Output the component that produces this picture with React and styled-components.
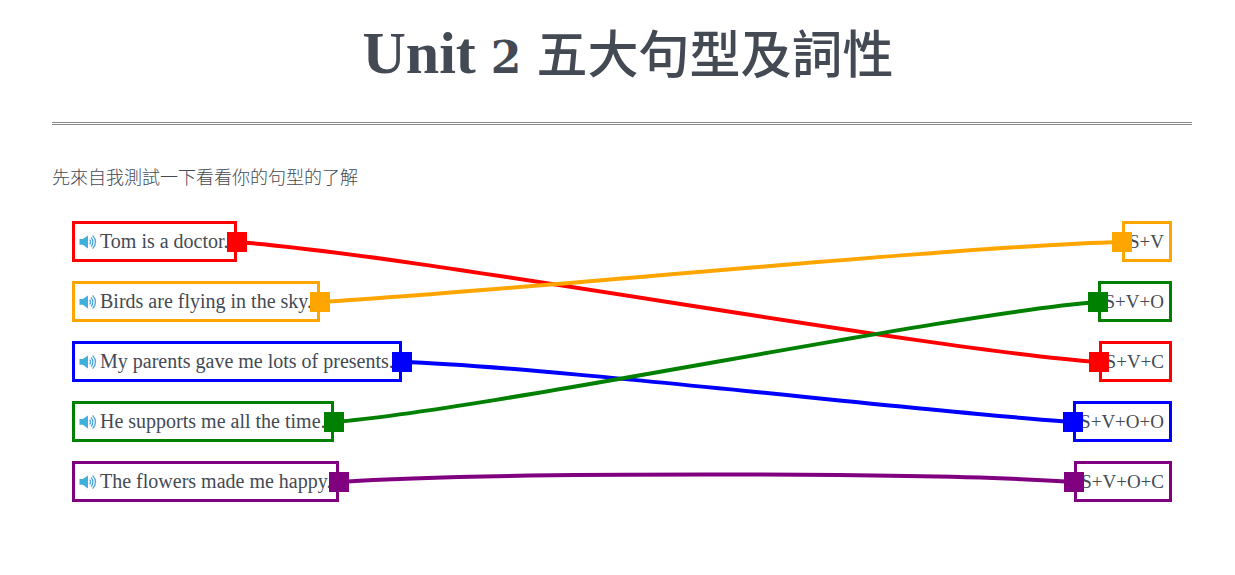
import React, { useLayoutEffect, useRef, useState } from "react";
import styled, { createGlobalStyle } from "styled-components";

const Global = createGlobalStyle`
  * { box-sizing: border-box; }
  body {
    margin: 0;
    background: #fff;
    color: #434a54;
    font-family: "Liberation Serif", "Noto Sans CJK TC", serif;
    font-size: 20px;
  }
`;

const Page = styled.main`
  padding: 16px 43px 40px 52px;
`;

const Title = styled.h1`
  margin: 0;
  padding-left: 12px;
  height: 72px;
  text-align: center;
  font-size: 60px;
  line-height: 70px;
  font-weight: 700;
  white-space: nowrap;
`;

const Numeral = styled.span`
  font-family: "DejaVu Serif", serif;
  font-size: 44px;
`;

const Han = styled.span`
  font-family: "Noto Sans CJK TC", sans-serif;
  font-size: 51px;
  font-weight: 500;
`;

const Rule = styled.hr`
  margin: 34px 0 37px;
  border: 0;
  border-top: 3px double #85878b;
`;

const Intro = styled.p`
  margin: 0;
  font-family: "Noto Sans CJK TC", sans-serif;
  font-size: 18px;
  font-weight: 300;
  line-height: 28px;
`;

const Board = styled.section`
  position: relative;
  display: flex;
  justify-content: space-between;
  margin-top: 31px;
  padding: 0 20px;
`;

const Column = styled.ul`
  display: flex;
  flex-direction: column;
  align-items: ${(p) => p.$align};
  gap: 19px;
  margin: 0;
  padding: 0;
  font-size: ${(p) => p.$size};
  list-style: none;
`;

const Item = styled.li`
  position: relative;
  display: flex;
  align-items: center;
  gap: 3px;
  height: 41px;
  padding: 0 5px 0 4px;
  border: 3px solid ${(p) => p.$color};
  white-space: nowrap;
`;

const Handle = styled.button`
  position: absolute;
  top: 8px;
  ${(p) => (p.$side === "right" ? "right: -13px;" : "left: -13px;")}
  z-index: 2;
  width: 20px;
  height: 20px;
  padding: 0;
  border: 0;
  background: ${(p) => p.$color};
`;

const Listen = styled.button`
  display: flex;
  padding: 0;
  border: 0;
  background: none;
`;

const Wires = styled.svg`
  position: absolute;
  inset: 0;
  width: 100%;
  height: 100%;
  overflow: visible;
  pointer-events: none;
`;

const prompts = [
  { text: "Tom is a doctor.", color: "red" },
  { text: "Birds are flying in the sky.", color: "orange" },
  { text: "My parents gave me lots of presents.", color: "blue" },
  { text: "He supports me all the time.", color: "green" },
  { text: "The flowers made me happy.", color: "purple" },
];

const answers = [
  { text: "S+V", color: "orange" },
  { text: "S+V+O", color: "green" },
  { text: "S+V+C", color: "red" },
  { text: "S+V+O+O", color: "blue" },
  { text: "S+V+O+C", color: "purple" },
];

const Speaker = () => (
  <svg width="18" height="16" viewBox="0 0 18 16" fill="none" aria-hidden="true">
    <path d="M0.5 5H3.8L9 1.4V14.4L3.8 10.8H0.5Z" fill="#3fafdc" />
    <path d="M10.6 5.6Q12.6 8 10.6 10.4M12 3.4Q15.8 8 12 12.6M13.6 1.4Q19.4 8 13.6 14.6" stroke="#4fa6d8" strokeWidth="1.3" />
  </svg>
);

// Each wire is an S-curve; flatter wires bow upwards a little more.
function wire(a, b) {
  const dx = b.x - a.x;
  const dy = b.y - a.y;
  const reach = dx / 5;
  const bow = Math.max(0, 10 - Math.abs(dy) / 8);
  const c1 = a.y + dy * 0.1 - bow;
  const c2 = b.y - dy * 0.1 - bow;
  return `M${a.x} ${a.y}C${a.x + reach} ${c1} ${b.x - reach} ${c2} ${b.x} ${b.y}`;
}

export default function App() {
  const board = useRef(null);
  const starts = useRef({});
  const ends = useRef({});
  const [paths, setPaths] = useState([]);

  useLayoutEffect(() => {
    const measure = () => {
      const base = board.current.getBoundingClientRect();
      const centre = (el) => {
        const r = el.getBoundingClientRect();
        return { x: r.left + r.width / 2 - base.left, y: r.top + r.height / 2 - base.top };
      };
      setPaths(
        ["red", "orange", "blue", "green", "purple"].map((color) => ({
          color,
          d: wire(centre(starts.current[color]), centre(ends.current[color])),
        }))
      );
    };
    measure();
    const observer = new ResizeObserver(measure);
    observer.observe(board.current);
    return () => observer.disconnect();
  }, []);

  return (
    <Page>
      <Global />
      <Title>
        Unit <Numeral>2</Numeral> <Han lang="zh-Hant">五大句型及詞性</Han>
      </Title>
      <Rule />
      <Intro lang="zh-Hant">先來自我測試一下看看你的句型的了解</Intro>
      <Board ref={board}>
        <Column $align="flex-start" $size="20px">
          {prompts.map(({ text, color }) => (
            <Item key={color} $color={color}>
              <Listen type="button" aria-label="Listen"><Speaker /></Listen>
              {text}
              <Handle type="button" aria-label={text} $side="right" $color={color} ref={(el) => { starts.current[color] = el; }} />
            </Item>
          ))}
        </Column>
        <Column $align="flex-end" $size="19px">
          {answers.map(({ text, color }) => (
            <Item key={color} $color={color}>
              {text}
              <Handle type="button" aria-label={text} $side="left" $color={color} ref={(el) => { ends.current[color] = el; }} />
            </Item>
          ))}
        </Column>
        <Wires aria-hidden="true">
          {paths.map(({ color, d }) => (
            <path key={color} d={d} fill="none" stroke={color} strokeWidth="4" />
          ))}
        </Wires>
      </Board>
    </Page>
  );
}
